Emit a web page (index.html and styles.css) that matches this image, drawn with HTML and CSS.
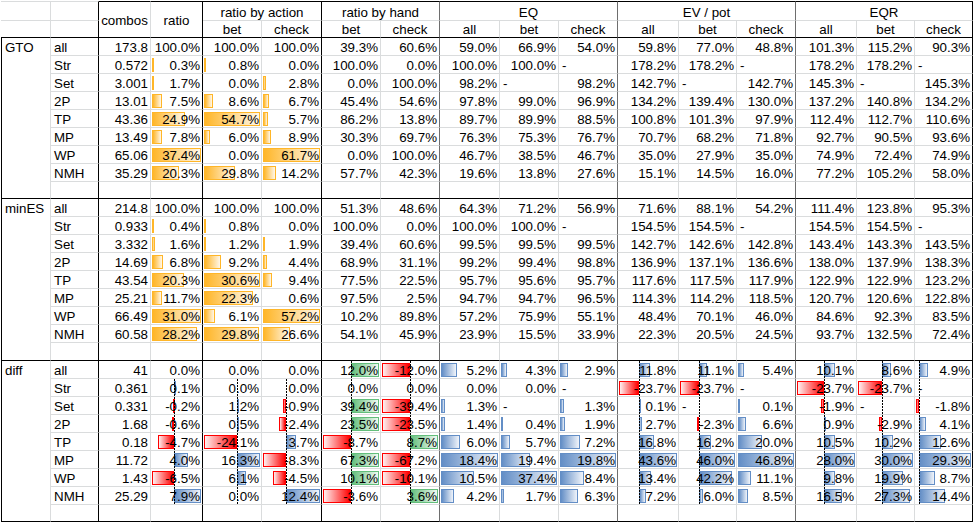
FILE: index.html
```html
<!DOCTYPE html>
<html>
<head>
<meta charset="utf-8">
<title>GTO vs minES</title>
<link rel="stylesheet" href="styles.css">
</head>
<body>
<div class="sheet">
  <div class="c top"></div><div class="c top kr"></div>
  <div class="c h m kt kb">combos</div><div class="c h m kt kb kr">ratio</div>
  <div class="c h s2 kt kr">ratio by action</div>
  <div class="c h s2 kt gr">ratio by hand</div>
  <div class="c h s3 kt gr">EQ</div>
  <div class="c h s3 kt gr">EV / pot</div>
  <div class="c h s3 kt kr">EQR</div>

  <div class="c kb"></div><div class="c kb kr"></div>
  <div class="c h kb">bet</div><div class="c h kb kr">check</div>
  <div class="c h kb">bet</div><div class="c h kb gr">check</div>
  <div class="c h kb">all</div><div class="c h kb">bet</div><div class="c h kb gr">check</div>
  <div class="c h kb">all</div><div class="c h kb">bet</div><div class="c h kb gr">check</div>
  <div class="c h kb">all</div><div class="c h kb">bet</div><div class="c h kb kr">check</div>

  <!-- GTO -->
  <div class="grp">GTO</div>
  <div class="row"><div>all</div><div>173.8</div><div>100.0%</div><div>100.0%</div><div>100.0%</div><div>39.3%</div><div>60.6%</div><div>59.0%</div><div>66.9%</div><div>54.0%</div><div>59.8%</div><div>77.0%</div><div>48.8%</div><div>101.3%</div><div>115.2%</div><div>90.3%</div></div>
  <div class="row"><div>Str</div><div>0.572</div><div class="d"><span class="db"><i class="po" style="width:0.8%"></i></span>0.3%</div><div class="d"><span class="db"><i class="po" style="width:1.46%"></i></span>0.8%</div><div>0.0%</div><div>100.0%</div><div>0.0%</div><div>100.0%</div><div>100.0%</div><div class="t">-</div><div>178.2%</div><div>178.2%</div><div class="t">-</div><div>178.2%</div><div>178.2%</div><div class="t">-</div></div>
  <div class="row"><div>Set</div><div>3.001</div><div class="d"><span class="db"><i class="po" style="width:4.55%"></i></span>1.7%</div><div>0.0%</div><div class="d"><span class="db"><i class="po" style="width:4.54%"></i></span>2.8%</div><div>0.0%</div><div>100.0%</div><div>98.2%</div><div class="t">-</div><div>98.2%</div><div>142.7%</div><div class="t">-</div><div>142.7%</div><div>145.3%</div><div class="t">-</div><div>145.3%</div></div>
  <div class="row"><div>2P</div><div>13.01</div><div class="d"><span class="db"><i class="po" style="width:20.05%"></i></span>7.5%</div><div class="d"><span class="db"><i class="po" style="width:15.72%"></i></span>8.6%</div><div class="d"><span class="db"><i class="po" style="width:10.86%"></i></span>6.7%</div><div>45.4%</div><div>54.6%</div><div>97.8%</div><div>99.0%</div><div>96.9%</div><div>134.2%</div><div>139.4%</div><div>130.0%</div><div>137.2%</div><div>140.8%</div><div>134.2%</div></div>
  <div class="row"><div>TP</div><div>43.36</div><div class="d"><span class="db"><i class="po" style="width:66.58%"></i></span>24.9%</div><div class="d"><span class="db"><i class="po" style="width:100%"></i></span>54.7%</div><div class="d"><span class="db"><i class="po" style="width:9.24%"></i></span>5.7%</div><div>86.2%</div><div>13.8%</div><div>89.7%</div><div>89.9%</div><div>88.5%</div><div>100.8%</div><div>101.3%</div><div>97.9%</div><div>112.4%</div><div>112.7%</div><div>110.6%</div></div>
  <div class="row"><div>MP</div><div>13.49</div><div class="d"><span class="db"><i class="po" style="width:20.86%"></i></span>7.8%</div><div class="d"><span class="db"><i class="po" style="width:10.97%"></i></span>6.0%</div><div class="d"><span class="db"><i class="po" style="width:14.42%"></i></span>8.9%</div><div>30.3%</div><div>69.7%</div><div>76.3%</div><div>75.3%</div><div>76.7%</div><div>70.7%</div><div>68.2%</div><div>71.8%</div><div>92.7%</div><div>90.5%</div><div>93.6%</div></div>
  <div class="row"><div>WP</div><div>65.06</div><div class="d"><span class="db"><i class="po" style="width:100%"></i></span>37.4%</div><div>0.0%</div><div class="d"><span class="db"><i class="po" style="width:100%"></i></span>61.7%</div><div>0.0%</div><div>100.0%</div><div>46.7%</div><div>38.5%</div><div>46.7%</div><div>35.0%</div><div>27.9%</div><div>35.0%</div><div>74.9%</div><div>72.4%</div><div>74.9%</div></div>
  <div class="row"><div>NMH</div><div>35.29</div><div class="d"><span class="db"><i class="po" style="width:54.28%"></i></span>20.3%</div><div class="d"><span class="db"><i class="po" style="width:54.48%"></i></span>29.8%</div><div class="d"><span class="db"><i class="po" style="width:23.01%"></i></span>14.2%</div><div>57.7%</div><div>42.3%</div><div>19.6%</div><div>13.8%</div><div>27.6%</div><div>15.1%</div><div>14.5%</div><div>16.0%</div><div>77.2%</div><div>105.2%</div><div>58.0%</div></div>
  <div class="row end"><div></div><div></div><div></div><div></div><div></div><div></div><div></div><div></div><div></div><div></div><div></div><div></div><div></div><div></div><div></div><div></div></div>

  <!-- minES -->
  <div class="grp">minES</div>
  <div class="row"><div>all</div><div>214.8</div><div>100.0%</div><div>100.0%</div><div>100.0%</div><div>51.3%</div><div>48.6%</div><div>64.3%</div><div>71.2%</div><div>56.9%</div><div>71.6%</div><div>88.1%</div><div>54.2%</div><div>111.4%</div><div>123.8%</div><div>95.3%</div></div>
  <div class="row"><div>Str</div><div>0.933</div><div class="d"><span class="db"><i class="po" style="width:1.29%"></i></span>0.4%</div><div class="d"><span class="db"><i class="po" style="width:2.61%"></i></span>0.8%</div><div>0.0%</div><div>100.0%</div><div>0.0%</div><div>100.0%</div><div>100.0%</div><div class="t">-</div><div>154.5%</div><div>154.5%</div><div class="t">-</div><div>154.5%</div><div>154.5%</div><div class="t">-</div></div>
  <div class="row"><div>Set</div><div>3.332</div><div class="d"><span class="db"><i class="po" style="width:5.16%"></i></span>1.6%</div><div class="d"><span class="db"><i class="po" style="width:3.92%"></i></span>1.2%</div><div class="d"><span class="db"><i class="po" style="width:3.32%"></i></span>1.9%</div><div>39.4%</div><div>60.6%</div><div>99.5%</div><div>99.5%</div><div>99.5%</div><div>142.7%</div><div>142.6%</div><div>142.8%</div><div>143.4%</div><div>143.3%</div><div>143.5%</div></div>
  <div class="row"><div>2P</div><div>14.69</div><div class="d"><span class="db"><i class="po" style="width:21.94%"></i></span>6.8%</div><div class="d"><span class="db"><i class="po" style="width:30.07%"></i></span>9.2%</div><div class="d"><span class="db"><i class="po" style="width:7.69%"></i></span>4.4%</div><div>68.9%</div><div>31.1%</div><div>99.2%</div><div>99.4%</div><div>98.8%</div><div>136.9%</div><div>137.1%</div><div>136.6%</div><div>138.0%</div><div>137.9%</div><div>138.3%</div></div>
  <div class="row"><div>TP</div><div>43.54</div><div class="d"><span class="db"><i class="po" style="width:65.48%"></i></span>20.3%</div><div class="d"><span class="db"><i class="po" style="width:100%"></i></span>30.6%</div><div class="d"><span class="db"><i class="po" style="width:16.43%"></i></span>9.4%</div><div>77.5%</div><div>22.5%</div><div>95.7%</div><div>95.6%</div><div>95.7%</div><div>117.6%</div><div>117.5%</div><div>117.9%</div><div>122.9%</div><div>122.9%</div><div>123.2%</div></div>
  <div class="row"><div>MP</div><div>25.21</div><div class="d"><span class="db"><i class="po" style="width:21%"></i></span>11.7%</div><div class="d"><span class="db"><i class="po" style="width:88%"></i></span>22.3%</div><div>0.6%</div><div>97.5%</div><div>2.5%</div><div>94.7%</div><div>94.7%</div><div>96.5%</div><div>114.3%</div><div>114.2%</div><div>118.5%</div><div>120.7%</div><div>120.6%</div><div>122.8%</div></div>
  <div class="row"><div>WP</div><div>66.49</div><div class="d"><span class="db"><i class="po" style="width:100%"></i></span>31.0%</div><div class="d"><span class="db"><i class="po" style="width:19.93%"></i></span>6.1%</div><div class="d"><span class="db"><i class="po" style="width:100%"></i></span>57.2%</div><div>10.2%</div><div>89.8%</div><div>57.2%</div><div>75.9%</div><div>55.1%</div><div>48.4%</div><div>70.1%</div><div>46.0%</div><div>84.6%</div><div>92.3%</div><div>83.5%</div></div>
  <div class="row"><div>NMH</div><div>60.58</div><div class="d"><span class="db"><i class="po" style="width:90.97%"></i></span>28.2%</div><div class="d"><span class="db"><i class="po" style="width:97.39%"></i></span>29.8%</div><div class="d"><span class="db"><i class="po" style="width:46.5%"></i></span>26.6%</div><div>54.1%</div><div>45.9%</div><div>23.9%</div><div>15.5%</div><div>33.9%</div><div>22.3%</div><div>20.5%</div><div>24.5%</div><div>93.7%</div><div>132.5%</div><div>72.4%</div></div>
  <div class="row end"><div></div><div></div><div></div><div></div><div></div><div></div><div></div><div></div><div></div><div></div><div></div><div></div><div></div><div></div><div></div><div></div></div>

  <!-- diff -->
  <div class="grp">diff</div>
  <div class="row"><div>all</div><div>41</div><div>0.0%</div><div>0.0%</div><div>0.0%</div>
    <div class="d"><span class="db"><i class="pg" style="left:50%;width:50%"></i><i class="ax" style="left:50%"></i></span>12.0%</div>
    <div class="d"><span class="db"><i class="nr" style="width:50%"></i><i class="ax" style="left:50%"></i></span>-12.0%</div>
    <div class="d"><span class="db"><i class="pb" style="width:28.26%"></i></span>5.2%</div>
    <div class="d"><span class="db"><i class="pb" style="width:11.5%"></i></span>4.3%</div>
    <div class="d"><span class="db"><i class="pb" style="width:14.65%"></i></span>2.9%</div>
    <div class="d"><span class="db"><i class="pb" style="left:35.22%;width:17.53%"></i><i class="ax" style="left:35.22%"></i></span>11.8%</div>
    <div class="d"><span class="db"><i class="pb" style="left:34%;width:15.93%"></i><i class="ax" style="left:34%"></i></span>11.1%</div>
    <div class="d"><span class="db"><i class="pb" style="width:11.54%"></i></span>5.4%</div>
    <div class="d"><span class="db"><i class="pb" style="left:45.84%;width:19.54%"></i><i class="ax" style="left:45.84%"></i></span>10.1%</div>
    <div class="d"><span class="db"><i class="pb" style="left:44.13%;width:16.01%"></i><i class="ax" style="left:44.13%"></i></span>8.6%</div>
    <div class="d"><span class="db"><i class="pb" style="left:5.79%;width:15.76%"></i><i class="ax" style="left:5.79%"></i></span>4.9%</div>
  </div>
  <div class="row"><div>Str</div><div>0.361</div>
    <div class="d"><span class="db"><i class="pb" style="left:45.14%;width:0.69%"></i><i class="ax" style="left:45.14%"></i></span>0.1%</div>
    <div class="d"><span class="db"><i class="ax" style="left:59.65%"></i></span>0.0%</div>
    <div class="d"><span class="db"><i class="ax" style="left:40.1%"></i></span>0.0%</div>
    <div class="d"><span class="db"><i class="ax" style="left:50%"></i></span>0.0%</div>
    <div class="d"><span class="db"><i class="ax" style="left:50%"></i></span>0.0%</div>
    <div>0.0%</div><div>0.0%</div><div class="t">-</div>
    <div class="d"><span class="db"><i class="nr" style="width:35.22%"></i><i class="ax" style="left:35.22%"></i></span>-23.7%</div>
    <div class="d"><span class="db"><i class="nr" style="width:34%"></i><i class="ax" style="left:34%"></i></span>-23.7%</div>
    <div class="t">-</div>
    <div class="d"><span class="db"><i class="nr" style="width:45.84%"></i><i class="ax" style="left:45.84%"></i></span>-23.7%</div>
    <div class="d"><span class="db"><i class="nr" style="width:44.13%"></i><i class="ax" style="left:44.13%"></i></span>-23.7%</div>
    <div class="d t"><span class="db"><i class="ax" style="left:5.79%"></i></span>-</div>
  </div>
  <div class="row"><div>Set</div><div>0.331</div>
    <div class="d"><span class="db"><i class="nr" style="left:43.75%;width:1.39%"></i><i class="ax" style="left:45.14%"></i></span>-0.2%</div>
    <div class="d"><span class="db"><i class="pb" style="left:59.65%;width:2.97%"></i><i class="ax" style="left:59.65%"></i></span>1.2%</div>
    <div class="d"><span class="db"><i class="nr" style="left:35.75%;width:4.35%"></i><i class="ax" style="left:40.1%"></i></span>-0.9%</div>
    <div class="d"><span class="db"><i class="pg" style="left:50%;width:50%"></i><i class="ax" style="left:50%"></i></span>39.4%</div>
    <div class="d"><span class="db"><i class="nr" style="width:50%"></i><i class="ax" style="left:50%"></i></span>-39.4%</div>
    <div class="d"><span class="db"><i class="pb" style="width:7.07%"></i></span>1.3%</div>
    <div class="t">-</div>
    <div class="d"><span class="db"><i class="pb" style="width:6.57%"></i></span>1.3%</div>
    <div class="d"><span class="db"><i class="pb" style="left:35.22%;width:0.15%"></i><i class="ax" style="left:35.22%"></i></span>0.1%</div>
    <div class="d t"><span class="db"><i class="ax" style="left:34%"></i></span>-</div>
    <div class="d"><span class="db"><i class="pb" style="width:0.21%"></i></span>0.1%</div>
    <div class="d"><span class="db"><i class="nr" style="left:42.16%;width:3.68%"></i><i class="ax" style="left:45.84%"></i></span>-1.9%</div>
    <div class="d t"><span class="db"><i class="ax" style="left:44.13%"></i></span>-</div>
    <div class="d"><span class="db"><i class="nr" style="width:5.79%"></i><i class="ax" style="left:5.79%"></i></span>-1.8%</div>
  </div>
  <div class="row"><div>2P</div><div>1.68</div>
    <div class="d"><span class="db"><i class="nr" style="left:40.97%;width:4.17%"></i><i class="ax" style="left:45.14%"></i></span>-0.6%</div>
    <div class="d"><span class="db"><i class="pb" style="left:59.65%;width:1.24%"></i><i class="ax" style="left:59.65%"></i></span>0.5%</div>
    <div class="d"><span class="db"><i class="nr" style="left:28.5%;width:11.59%"></i><i class="ax" style="left:40.1%"></i></span>-2.4%</div>
    <div class="d"><span class="db"><i class="pg" style="left:50%;width:50%"></i><i class="ax" style="left:50%"></i></span>23.5%</div>
    <div class="d"><span class="db"><i class="nr" style="width:50%"></i><i class="ax" style="left:50%"></i></span>-23.5%</div>
    <div class="d"><span class="db"><i class="pb" style="width:7.61%"></i></span>1.4%</div>
    <div class="d"><span class="db"><i class="pb" style="width:1.07%"></i></span>0.4%</div>
    <div class="d"><span class="db"><i class="pb" style="width:9.6%"></i></span>1.9%</div>
    <div class="d"><span class="db"><i class="pb" style="left:35.22%;width:4.01%"></i><i class="ax" style="left:35.22%"></i></span>2.7%</div>
    <div class="d"><span class="db"><i class="nr" style="left:30.7%;width:3.3%"></i><i class="ax" style="left:34%"></i></span>-2.3%</div>
    <div class="d"><span class="db"><i class="pb" style="width:14.1%"></i></span>6.6%</div>
    <div class="d"><span class="db"><i class="pb" style="left:45.84%;width:1.74%"></i><i class="ax" style="left:45.84%"></i></span>0.9%</div>
    <div class="d"><span class="db"><i class="nr" style="left:38.73%;width:5.4%"></i><i class="ax" style="left:44.13%"></i></span>-2.9%</div>
    <div class="d"><span class="db"><i class="pb" style="left:5.79%;width:13.18%"></i><i class="ax" style="left:5.79%"></i></span>4.1%</div>
  </div>
  <div class="row"><div>TP</div><div>0.18</div>
    <div class="d"><span class="db"><i class="nr" style="left:12.5%;width:32.64%"></i><i class="ax" style="left:45.14%"></i></span>-4.7%</div>
    <div class="d"><span class="db"><i class="nr" style="width:59.65%"></i><i class="ax" style="left:59.65%"></i></span>-24.1%</div>
    <div class="d"><span class="db"><i class="pb" style="left:40.1%;width:17.87%"></i><i class="ax" style="left:40.1%"></i></span>3.7%</div>
    <div class="d"><span class="db"><i class="nr" style="width:50%"></i><i class="ax" style="left:50%"></i></span>-8.7%</div>
    <div class="d"><span class="db"><i class="pg" style="left:50%;width:50%"></i><i class="ax" style="left:50%"></i></span>8.7%</div>
    <div class="d"><span class="db"><i class="pb" style="width:32.61%"></i></span>6.0%</div>
    <div class="d"><span class="db"><i class="pb" style="width:15.24%"></i></span>5.7%</div>
    <div class="d"><span class="db"><i class="pb" style="width:36.36%"></i></span>7.2%</div>
    <div class="d"><span class="db"><i class="pb" style="left:35.22%;width:24.96%"></i><i class="ax" style="left:35.22%"></i></span>16.8%</div>
    <div class="d"><span class="db"><i class="pb" style="left:34%;width:23.24%"></i><i class="ax" style="left:34%"></i></span>16.2%</div>
    <div class="d"><span class="db"><i class="pb" style="width:42.74%"></i></span>20.0%</div>
    <div class="d"><span class="db"><i class="pb" style="left:45.84%;width:20.31%"></i><i class="ax" style="left:45.84%"></i></span>10.5%</div>
    <div class="d"><span class="db"><i class="pb" style="left:44.13%;width:18.99%"></i><i class="ax" style="left:44.13%"></i></span>10.2%</div>
    <div class="d"><span class="db"><i class="pb" style="left:5.79%;width:40.51%"></i><i class="ax" style="left:5.79%"></i></span>12.6%</div>
  </div>
  <div class="row"><div>MP</div><div>11.72</div>
    <div class="d"><span class="db"><i class="pb" style="left:45.14%;width:27.78%"></i><i class="ax" style="left:45.14%"></i></span>4.0%</div>
    <div class="d"><span class="db"><i class="pb" style="left:59.65%;width:40.35%"></i><i class="ax" style="left:59.65%"></i></span>16.3%</div>
    <div class="d"><span class="db"><i class="nr" style="width:40.1%"></i><i class="ax" style="left:40.1%"></i></span>-8.3%</div>
    <div class="d"><span class="db"><i class="pg" style="left:50%;width:50%"></i><i class="ax" style="left:50%"></i></span>67.3%</div>
    <div class="d"><span class="db"><i class="nr" style="width:50%"></i><i class="ax" style="left:50%"></i></span>-67.2%</div>
    <div class="d"><span class="db"><i class="pb" style="width:100%"></i></span>18.4%</div>
    <div class="d"><span class="db"><i class="pb" style="width:51.87%"></i></span>19.4%</div>
    <div class="d"><span class="db"><i class="pb" style="width:100%"></i></span>19.8%</div>
    <div class="d"><span class="db"><i class="pb" style="left:35.22%;width:64.78%"></i><i class="ax" style="left:35.22%"></i></span>43.6%</div>
    <div class="d"><span class="db"><i class="pb" style="left:34%;width:66%"></i><i class="ax" style="left:34%"></i></span>46.0%</div>
    <div class="d"><span class="db"><i class="pb" style="width:100%"></i></span>46.8%</div>
    <div class="d"><span class="db"><i class="pb" style="left:45.84%;width:54.16%"></i><i class="ax" style="left:45.84%"></i></span>28.0%</div>
    <div class="d"><span class="db"><i class="pb" style="left:44.13%;width:55.87%"></i><i class="ax" style="left:44.13%"></i></span>30.0%</div>
    <div class="d"><span class="db"><i class="pb" style="left:5.79%;width:94.21%"></i><i class="ax" style="left:5.79%"></i></span>29.3%</div>
  </div>
  <div class="row"><div>WP</div><div>1.43</div>
    <div class="d"><span class="db"><i class="nr" style="width:45.14%"></i><i class="ax" style="left:45.14%"></i></span>-6.5%</div>
    <div class="d"><span class="db"><i class="pb" style="left:59.65%;width:15.1%"></i><i class="ax" style="left:59.65%"></i></span>6.1%</div>
    <div class="d"><span class="db"><i class="nr" style="left:18.36%;width:21.74%"></i><i class="ax" style="left:40.1%"></i></span>-4.5%</div>
    <div class="d"><span class="db"><i class="pg" style="left:50%;width:50%"></i><i class="ax" style="left:50%"></i></span>10.1%</div>
    <div class="d"><span class="db"><i class="nr" style="width:50%"></i><i class="ax" style="left:50%"></i></span>-10.1%</div>
    <div class="d"><span class="db"><i class="pb" style="width:57.07%"></i></span>10.5%</div>
    <div class="d"><span class="db"><i class="pb" style="width:100%"></i></span>37.4%</div>
    <div class="d"><span class="db"><i class="pb" style="width:42.42%"></i></span>8.4%</div>
    <div class="d"><span class="db"><i class="pb" style="left:35.22%;width:19.91%"></i><i class="ax" style="left:35.22%"></i></span>13.4%</div>
    <div class="d"><span class="db"><i class="pb" style="left:34%;width:60.55%"></i><i class="ax" style="left:34%"></i></span>42.2%</div>
    <div class="d"><span class="db"><i class="pb" style="width:23.72%"></i></span>11.1%</div>
    <div class="d"><span class="db"><i class="pb" style="left:45.84%;width:18.96%"></i><i class="ax" style="left:45.84%"></i></span>9.8%</div>
    <div class="d"><span class="db"><i class="pb" style="left:44.13%;width:37.06%"></i><i class="ax" style="left:44.13%"></i></span>19.9%</div>
    <div class="d"><span class="db"><i class="pb" style="left:5.79%;width:27.97%"></i><i class="ax" style="left:5.79%"></i></span>8.7%</div>
  </div>
  <div class="row"><div>NMH</div><div>25.29</div>
    <div class="d"><span class="db"><i class="pb" style="left:45.14%;width:54.86%"></i><i class="ax" style="left:45.14%"></i></span>7.9%</div>
    <div class="d"><span class="db"><i class="ax" style="left:59.65%"></i></span>0.0%</div>
    <div class="d"><span class="db"><i class="pb" style="left:40.1%;width:59.9%"></i><i class="ax" style="left:40.1%"></i></span>12.4%</div>
    <div class="d"><span class="db"><i class="nr" style="width:50%"></i><i class="ax" style="left:50%"></i></span>-3.6%</div>
    <div class="d"><span class="db"><i class="pg" style="left:50%;width:50%"></i><i class="ax" style="left:50%"></i></span>3.6%</div>
    <div class="d"><span class="db"><i class="pb" style="width:22.83%"></i></span>4.2%</div>
    <div class="d"><span class="db"><i class="pb" style="width:4.55%"></i></span>1.7%</div>
    <div class="d"><span class="db"><i class="pb" style="width:31.82%"></i></span>6.3%</div>
    <div class="d"><span class="db"><i class="pb" style="left:35.22%;width:10.7%"></i><i class="ax" style="left:35.22%"></i></span>7.2%</div>
    <div class="d"><span class="db"><i class="pb" style="left:34%;width:8.61%"></i><i class="ax" style="left:34%"></i></span>6.0%</div>
    <div class="d"><span class="db"><i class="pb" style="width:18.16%"></i></span>8.5%</div>
    <div class="d"><span class="db"><i class="pb" style="left:45.84%;width:31.91%"></i><i class="ax" style="left:45.84%"></i></span>16.5%</div>
    <div class="d"><span class="db"><i class="pb" style="left:44.13%;width:50.84%"></i><i class="ax" style="left:44.13%"></i></span>27.3%</div>
    <div class="d"><span class="db"><i class="pb" style="left:5.79%;width:46.3%"></i><i class="ax" style="left:5.79%"></i></span>14.4%</div>
  </div>
  <div class="row end"><div></div><div></div><div></div><div></div><div></div><div></div><div></div><div></div><div></div><div></div><div></div><div></div><div></div><div></div><div></div><div></div></div>
</div>
</body>
</html>
```
FILE: styles.css
```css
:root {
  --g: #dadcdd;
  --k2: #6e6e6e;
}
* { box-sizing: border-box; }
body {
  margin: 0;
  background: #fff;
  color: #000;
  font-family: "Liberation Sans", Arial, sans-serif;
  font-size: 13.3333px;
  line-height: 15px;
}
.sheet {
  display: grid;
  grid-template-columns: 50px 48px 52px 52px 59px 60px 59px 59px 60px 59px 59px 61px 58px 59px 61px 58px 58px;
  grid-template-rows: 20px 17px repeat(8, 18px) 17px repeat(8, 18px) 18px repeat(8, 18px) 17px;
  margin: 1px 0 0 1px;
  width: max-content;
}
.row { display: contents; }

.c,
.row > * {
  display: flex;
  align-items: flex-end;
  justify-content: flex-end;
  padding: 0 2px 0 3px;
  border-right: 1px solid var(--g);
  border-bottom: 1px solid var(--g);
  white-space: nowrap;
  min-width: 0;
}
.row > :first-child { justify-content: flex-start; border-right-color: #000; }
.row > :nth-child(3),
.row > :nth-child(5),
.row > :nth-child(16) { border-right-color: #000; }
.row > :nth-child(7),
.row > :nth-child(10),
.row > :nth-child(13) { border-right-color: var(--k2); }
.row > .t { justify-content: flex-start; }
.row.end > * { border-bottom-color: #000; }

/* header */
.h { justify-content: center; padding: 0 2px; }
.top { border-top: 1px solid var(--g); }
.kt { border-top: 1px solid #000; }
.kb { border-bottom-color: #000; }
.kr { border-right-color: #000; }
.gr { border-right-color: var(--k2); }
.m { grid-row: span 2; align-items: center; padding-top: 2px; }
.s2 { grid-column: span 2; }
.s3 { grid-column: span 3; }

/* group label (merged down 9 rows) */
.grp {
  grid-row: span 9;
  grid-column: 1;
  padding: 2px 3px 0;
  border-left: 1px solid #000;
  border-right: 1px solid var(--g);
  border-bottom: 1px solid #000;
}

/* data bars */
.d { position: relative; z-index: 0; }
.db {
  position: absolute;
  left: 1px;
  right: 1px;
  top: 2px;
  bottom: 1px;
  z-index: -1;
}
.db i {
  position: absolute;
  top: 0;
  bottom: 0;
  left: 0;
  border: 1px solid;
}
.po { background: linear-gradient(90deg, #ffb628, #fff7e9); border-color: #ffb628 !important; }
.pb { background: linear-gradient(90deg, #638ec6, #f0f4fa); border-color: #638ec6 !important; }
.pg { background: linear-gradient(90deg, #63be7b, #eff9f2); border-color: #63be7b !important; }
.nr { background: linear-gradient(270deg, #ff0000, #ffefef); border-color: #ff0000 !important; }
.db .ax {
  top: -2px;
  bottom: -2px;
  width: 1px;
  border: 0;
  background: repeating-linear-gradient(180deg, #000 0 2px, transparent 2px 3px);
}
```
